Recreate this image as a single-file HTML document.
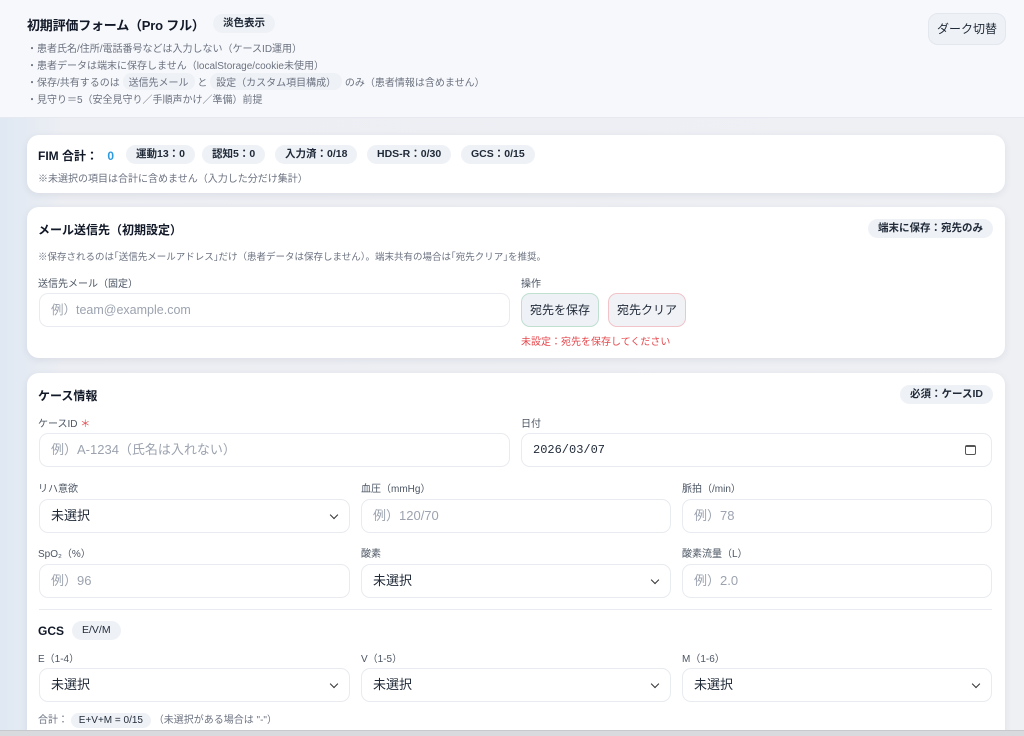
<!DOCTYPE html>
<html style="width:1024px;height:736px;overflow:hidden"><head><meta charset="utf-8"><style>
*{box-sizing:border-box;margin:0;padding:0}
body{width:1024px;height:736px;overflow:hidden;position:relative;font-family:"Liberation Sans","Noto Sans CJK JP",sans-serif;color:#1f2937;background:linear-gradient(90deg,#dfe8f3 0%,#eceef3 6%,#eef0f4 100%)}
.a{position:absolute}
.hdr{left:0;top:0;width:1024px;height:118px;background:#f7f8fb;border-bottom:1px solid #e6e9ef}
.pill{position:absolute;background:#eef1f6;border-radius:10px;font-size:10.5px;font-weight:bold;color:#1f2937;padding:0 10px;height:19px;line-height:19px;white-space:nowrap}
.note{font-size:10px;color:#6b7280;white-space:nowrap}
.ip{display:inline-block;background:#eef1f6;border-radius:8px;padding:1px 6px;color:#6b7280}
.card{position:absolute;left:27px;width:978px;background:#fff;border-radius:12px;box-shadow:0 2px 8px rgba(30,40,70,.08);overflow:hidden}
.lbl{position:absolute;font-size:10px;color:#4b5563;white-space:nowrap}
.in{position:absolute;height:34px;border:1px solid #e8ebf0;border-radius:9px;background:#fff;font-size:12px;color:#9ca3af;line-height:32px;padding-left:11px;white-space:nowrap}
.sel{color:#1f2937;font-size:13px}
.sel:after{content:"";position:absolute;right:12px;top:12px;width:5px;height:5px;border-right:1.5px solid #333;border-bottom:1.5px solid #333;transform:rotate(45deg)}
.h{position:absolute;font-size:12px;font-weight:bold;color:#111827;white-space:nowrap}
</style></head><body>
<div class="a hdr"></div>
<div class="a" style="left:27px;top:15px;font-size:13px;font-weight:bold;color:#111827;letter-spacing:-0.2px">初期評価フォーム（Pro フル）</div>
<div class="pill" style="left:213px;top:14px;">淡色表示</div>
<div class="a note" style="left:27px;top:40px">・患者氏名/住所/電話番号などは入力しない（ケースID運用）</div>
<div class="a note" style="left:27px;top:57px">・患者データは端末に保存しません（localStorage/cookie未使用）</div>
<div class="a note" style="left:27px;top:73px">・保存/共有するのは <span class="ip">送信先メール</span> と <span class="ip">設定（カスタム項目構成）</span> のみ（患者情報は含めません）</div>
<div class="a note" style="left:27px;top:91px">・見守り＝5（安全見守り／手順声かけ／準備）前提</div>
<div class="a" style="left:928px;top:13px;width:78px;height:32px;background:#eef1f6;border:1px solid #e3e7ee;border-radius:10px;font-size:12px;line-height:30px;text-align:center;color:#1f2937">ダーク切替</div>

<div class="card" style="top:135px;height:58px">
<div class="h" style="left:11px;top:12px;font-size:12px">FIM 合計： <span style="color:#2b9be0;margin-left:6px">0</span></div>
<div class="pill" style="left:99px;top:10px">運動13：0</div>
<div class="pill" style="left:175px;top:10px">認知5：0</div>
<div class="pill" style="left:248px;top:10px">入力済：0/18</div>
<div class="pill" style="left:340px;top:10px">HDS-R：0/30</div>
<div class="pill" style="left:434px;top:10px">GCS：0/15</div>
<div class="a note" style="left:11px;top:35px">※未選択の項目は合計に含めません（入力した分だけ集計）</div>
</div>

<div class="card" style="top:207px;height:151px">
<div class="h" style="left:11px;top:14px">メール送信先（初期設定）</div>
<div class="pill" style="right:12px;top:12px">端末に保存：宛先のみ</div>
<div class="a note" style="left:11px;top:42px;font-size:9.5px">※保存されるのは｢送信先メールアドレス｣だけ（患者データは保存しません）。端末共有の場合は｢宛先クリア｣を推奨。</div>
<div class="lbl" style="left:11px;top:68px">送信先メール（固定）</div>
<div class="in" style="left:12px;top:86px;width:471px;font-size:12.5px">例）team@example.com</div>
<div class="lbl" style="left:494px;top:68px">操作</div>
<div class="a" style="left:494px;top:86px;width:78px;height:34px;border:1px solid #bfe0cf;background:#eef1f6;border-radius:9px;font-size:12px;line-height:32px;text-align:center">宛先を保存</div>
<div class="a" style="left:581px;top:86px;width:78px;height:34px;border:1px solid #f0c4c8;background:#f1f2f6;border-radius:9px;font-size:12px;line-height:32px;text-align:center">宛先クリア</div>
<div class="a" style="left:494px;top:126px;font-size:10px;color:#e5484d;white-space:nowrap">未設定：宛先を保存してください</div>
</div>

<div class="card" style="top:373px;height:380px">
<div class="h" style="left:11px;top:14px">ケース情報</div>
<div class="pill" style="right:12px;top:12px">必須：ケースID</div>
<div class="lbl" style="left:11px;top:42px">ケースID <span style="color:#e5484d">＊</span></div>
<div class="in" style="left:12px;top:60px;width:471px;font-size:13px">例）A-1234（氏名は入れない）</div>
<div class="lbl" style="left:494px;top:42px">日付</div>
<div class="in" style="left:494px;top:60px;width:471px;color:#1f2937;font-family:'Liberation Mono',monospace;font-size:12px">2026/03/07<span style="position:absolute;right:15px;top:11px;width:11px;height:10px;border:1.5px solid #555;border-radius:2px;border-top-width:2.5px"></span></div>

<div class="lbl" style="left:11px;top:107px">リハ意欲</div>
<div class="in sel" style="left:12px;top:126px;width:311px">未選択</div>
<div class="lbl" style="left:334px;top:107px">血圧（mmHg）</div>
<div class="in" style="left:334px;top:126px;width:310px;font-size:13px">例）120/70</div>
<div class="lbl" style="left:655px;top:107px">脈拍（/min）</div>
<div class="in" style="left:655px;top:126px;width:310px;font-size:13px">例）78</div>

<div class="lbl" style="left:11px;top:172px">SpO₂（%）</div>
<div class="in" style="left:12px;top:191px;width:311px;font-size:13px">例）96</div>
<div class="lbl" style="left:334px;top:172px">酸素</div>
<div class="in sel" style="left:334px;top:191px;width:310px">未選択</div>
<div class="lbl" style="left:655px;top:172px">酸素流量（L）</div>
<div class="in" style="left:655px;top:191px;width:310px;font-size:13px">例）2.0</div>

<div class="a" style="left:12px;top:236px;width:953px;height:1px;background:#e8ebf0"></div>
<div class="h" style="left:11px;top:251px">GCS</div>
<div class="pill" style="left:45px;top:248px;font-weight:normal">E/V/M</div>
<div class="lbl" style="left:11px;top:277px">E（1-4）</div>
<div class="in sel" style="left:12px;top:295px;width:311px">未選択</div>
<div class="lbl" style="left:334px;top:277px">V（1-5）</div>
<div class="in sel" style="left:334px;top:295px;width:310px">未選択</div>
<div class="lbl" style="left:655px;top:277px">M（1-6）</div>
<div class="in sel" style="left:655px;top:295px;width:310px">未選択</div>
<div class="a note" style="left:11px;top:338px">合計： <span class="ip" style="color:#1f2937;padding:2px 8px">E+V+M = 0/15</span> （未選択がある場合は "-"）</div>
</div>
<div class="a" style="left:0;top:730px;width:1024px;height:6px;background:#d9dade;border-top:1px solid #c8c9cd"></div>
</body></html>
